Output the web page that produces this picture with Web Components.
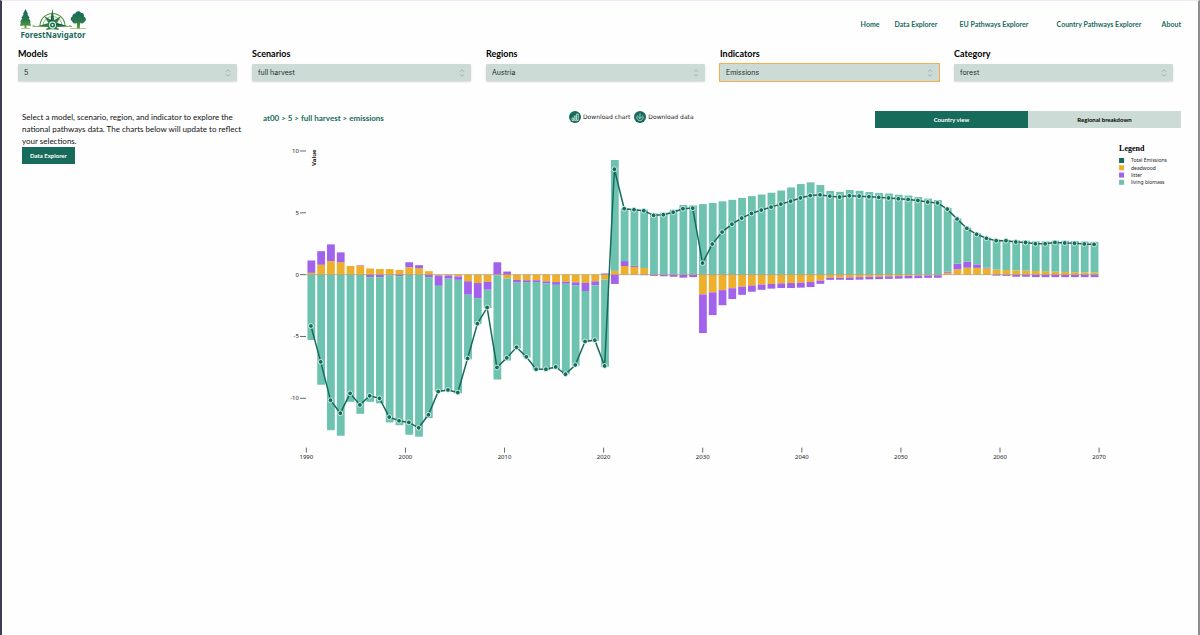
<!DOCTYPE html>
<html lang="en">
<head>
<meta charset="utf-8">
<meta name="viewport" content="width=device-width, initial-scale=1">
<title>ForestNavigator</title>
<style>
  html, body { margin: 0; height: 100%; }
  body {
    --green: #176b5b;
    --pale: #cddbd7;
    --ui: "Inter", "Liberation Sans", sans-serif;
    --head: "Lato", "Liberation Sans", sans-serif;
    background: #fefefe;
    color: #111;
    font-family: var(--head);
  }
</style>
</head>
<body>
<forest-app></forest-app>

<script>
class ForestLogo extends HTMLElement {
  connectedCallback() {
    this.attachShadow({ mode: 'open' });
    this.shadowRoot.innerHTML = `
      <style>
        :host { display: block; }
        a { display: flex; flex-direction: column; align-items: center; color: #1b6a5c; text-decoration: none; }
        svg { display: block; }
        span { font: 700 8px/10px "Noto Sans", "Open Sans", sans-serif; }
      </style>
      <a href="#">
        <svg width="68" height="21" viewBox="0 0 68 21" aria-hidden="true">
          <defs>
            <linearGradient id="g" x1="0" y1="0" x2="0" y2="1">
              <stop offset="0" stop-color="#12695c"/><stop offset=".6" stop-color="#2c7a4c"/><stop offset="1" stop-color="#5fa33a"/>
            </linearGradient>
          </defs>
          <path d="M6.500 0 9 5 8.300 5 10.700 9 9.800 9 12 13.500 11 13.300 12 17 7.500 16.500 7.500 19H5.500V16.500L1 17 2 13.300 1 13.500 3.200 9 2.300 9 4.700 5H4Z" fill="url(#g)"/>
          <path d="M2 19.500H11M51 19.500H67" stroke="#8dbb58" stroke-width=".7"/>
          <g fill="none" stroke="#55953b">
            <path d="M21 17A12.500 12.500 0 0 1 46 17" stroke-width="1.100"/>
            <path d="M24 17A9.500 9.500 0 0 1 43 17" stroke-width=".7"/>
            <path d="M27 20H40" stroke-width=".7"/>
            <path d="M14 17.500H53" stroke-width=".7"/>
          </g>
          <path d="M33.500 0 35.300 11 42 7 37.500 14 48 17 37.500 18 40 21 33.500 19.500 27 21 29.500 18 19 17 29.500 14 25 7 31.700 11Z" fill="#2e7d45"/>
          <path d="M33.500 0V13L25 7 31.700 11ZM48 17 37 16 42 7 37.500 14Z" fill="#12594e"/>
          <circle cx="33.500" cy="16" r="3.400" fill="#fff"/>
          <circle cx="33.500" cy="16" r="2.500" fill="#176b5b"/>
          <circle cx="33.500" cy="16" r="1" fill="#fff"/>
          <circle cx="14.500" cy="17" r="1" fill="#8dbb58"/><circle cx="51" cy="17" r="1" fill="#8dbb58"/>
          <path d="M53 12C51 11 51.500 8 53.500 7.500 53 5.500 55 4 56.500 4.500 57 2 61 1.500 62 4 64.500 3.500 65.500 6 64.800 7.500 67.500 8.500 67.500 12 65.500 12.700 64.500 15 62 14.500 61 14L60.800 19.500H58L58 14C56.500 15 54 15 53 12Z" fill="url(#g)"/>
        </svg>
        <span>ForestNavigator</span>
      </a>
    `;
  }
}
customElements.define('forest-logo', ForestLogo);

class ForestNav extends HTMLElement {
  connectedCallback() {
    this.attachShadow({ mode: 'open' });
    this.shadowRoot.innerHTML = `
      <style>
        :host { display: block; }
        nav { display: grid; grid-template-columns: 34px 65px 97px 105px auto; }
        a { color: var(--green); font: 700 7px/9px var(--head); text-decoration: none; white-space: nowrap; }
      </style>
      <nav>
        <a href="#">Home</a>
        <a href="#">Data Explorer</a>
        <a href="#">EU Pathways Explorer</a>
        <a href="#">Country Pathways Explorer</a>
        <a href="#">About</a>
      </nav>
    `;
  }
}
customElements.define('forest-nav', ForestNav);

class FilterSelect extends HTMLElement {
  connectedCallback() {
    this.attachShadow({ mode: 'open' });
    this.shadowRoot.innerHTML = `
      <style>
        :host { display: block; }
        label { display: block; font: 700 9px/12px var(--head); margin-bottom: 4px; color: #000; }
        .field { display: grid; align-items: center; }
        select, svg { grid-area: 1 / 1; }
        select {
          appearance: none;
          box-sizing: border-box;
          width: 100%;
          height: 17px;
          padding: 0 6px;
          border: 0;
          border-radius: 1px;
          outline: 0;
          background: var(--pale);
          box-shadow: 0 1px 2px rgba(0, 0, 0, .16);
          color: #1d2b2b;
          font: 400 7px/16px var(--ui);
        }
        :host([active]) .field { background: #f7ae4e; margin: -1px; padding: 1px; }
        :host([active]) select { box-shadow: none; }
        svg { justify-self: end; margin-right: 6px; pointer-events: none; }
      </style>
      <label for="s">${this.getAttribute('label')}</label>
      <div class="field">
        <select id="s"><option>${this.getAttribute('value')}</option></select>
        <svg width="6" height="8" viewBox="0 0 6 8" fill="none" stroke="#9aa6ad" stroke-width=".8" aria-hidden="true">
          <path d="M1 2.800 3 .8 5 2.800M1 5.200 3 7.200 5 5.200"/>
        </svg>
      </div>
    `;
  }
}
customElements.define('filter-select', FilterSelect);

class DownloadButton extends HTMLElement {
  connectedCallback() {
    const icons = {
      chart: '<path d="M3 9.500V7H4.600V9.500ZM5.300 9.500V5H6.900V9.500ZM7.600 9.500V3H9.200V9.500Z"/>',
      data: '<path d="M6 2.500V7.500M4.200 5.800 6 7.600 7.800 5.800M3.500 4.500C2 7 3.500 9.500 6 9.500S10 7 8.500 4.500"/>'
    };
    this.attachShadow({ mode: 'open' });
    this.shadowRoot.innerHTML = `
      <style>
        :host { display: block; }
        button {
          display: flex;
          align-items: center;
          gap: 2px;
          padding: 0;
          border: 0;
          background: none;
          color: #222;
          font: 400 6px/12px "DejaVu Sans", sans-serif;
          white-space: nowrap;
        }
        svg { display: block; }
      </style>
      <button type="button">
        <svg width="12" height="12" viewBox="0 0 12 12" aria-hidden="true">
          <circle cx="6" cy="6" r="6" fill="#176b5b"/>
          <g fill="none" stroke="#d5e8e2" stroke-width=".8">${icons[this.getAttribute('icon')]}</g>
        </svg>
        <slot></slot>
      </button>
    `;
  }
}
customElements.define('download-button', DownloadButton);

class ViewToggle extends HTMLElement {
  connectedCallback() {
    this.attachShadow({ mode: 'open' });
    this.shadowRoot.innerHTML = `
      <style>
        :host { display: grid; grid-template-columns: 1fr 1fr; }
        button {
          height: 17px;
          padding: 0;
          border: 0;
          background: var(--pale);
          color: #000;
          font: 700 6px/17px var(--head);
        }
        button[aria-pressed="true"] { background: var(--green); color: #fff; }
      </style>
      <button type="button" aria-pressed="true">Country view</button>
      <button type="button" aria-pressed="false">Regional breakdown</button>
    `;
  }
}
customElements.define('view-toggle', ViewToggle);

// Yearly values 1990-2070: [deadwood, litter, end of the stacked bar, total emissions]
const YEARS = [
  [.15, 1, -5.28, -4.15], [.8, 1.1, -8.9, -7.05], [1.1, 1.35, -12.58, -10.15], [1, .8, -13.03, -11.2],
  [.7, 0, -10.28, -9.6], [.72, .04, -11.25, -10.53], [.5, -.2, -10.28, -9.8], [.45, -.2, -10.4, -10],
  [.45, -.04, -11.95, -11.52], [.38, -.13, -12.17, -11.82], [.6, .4, -12.95, -11.95], [.52, .25, -13.1, -12.38],
  [.28, -.2, -11.6, -11.33], [-.08, -.82, -9.45, -9.45], [-.07, -.25, -9.35, -9.32], [-.15, -.27, -9.6, -9.53],
  [-.53, -1.09, -6.85, -6.78], [-.68, -1.22, -4, -3.97], [-.57, -.65, -2.7, -2.66], [-.05, 1, -8.48, -7.5],
  [-.3, .25, -6.95, -6.73], [-.43, -.22, -5.97, -5.87], [-.45, -.15, -6.7, -6.65], [-.45, -.15, -7.7, -7.65],
  [-.55, -.17, -7.72, -7.65], [-.6, -.23, -7.6, -7.46], [-.57, -.16, -8.05, -8.05], [-.62, -.26, -7.35, -7.3],
  [-.66, -.66, -5.4, -5.4], [-.54, -.33, -5.35, -5.3], [-.4, .1, -7.45, -7.38], [.3, -.75, 9.27, 8.52],
  [.7, .4, 5.35, 5.33], [.62, .1, 5.3, 5.25], [.53, -.04, 5.25, 5.17], [0, -.1, 4.95, 4.8],
  [0, -.13, 5, 4.85], [0, -.17, 5.25, 5.05], [0, -.24, 5.63, 5.33], [0, -.2, 5.6, 5.38],
  [-1.6, -3.13, 5.7, .94], [-1.43, -1.84, 5.8, 2.47], [-1.25, -1.22, 5.93, 3.44], [-1.1, -.87, 6.05, 4.08],
  [-.97, -.66, 6.2, 4.57], [-.87, -.51, 6.35, 4.95], [-.8, -.43, 6.48, 5.22], [-.75, -.38, 6.62, 5.46],
  [-.7, -.38, 6.8, 5.7], [-.68, -.4, 7.05, 5.94], [-.65, -.4, 7.33, 6.2], [-.6, -.4, 7.46, 6.4],
  [-.48, -.27, 7.25, 6.45], [-.25, -.17, 6.77, 6.35], [-.24, -.17, 6.7, 6.28], [-.23, -.2, 6.85, 6.38],
  [-.2, -.2, 6.78, 6.35], [-.18, -.2, 6.68, 6.3], [-.16, -.2, 6.6, 6.25], [-.14, -.2, 6.56, 6.2],
  [-.12, -.2, 6.46, 6.14], [-.1, -.2, 6.4, 6.08], [-.08, -.2, 6.28, 6], [-.06, -.2, 6.15, 5.87],
  [-.05, -.2, 6.03, 5.8], [.15, .1, 5.4, 5.3], [.43, .46, 4.55, 4.5], [.57, .5, 3.8, 3.75],
  [.55, .28, 3.35, 3.26], [.5, .06, 3, 2.94], [.4, -.08, 2.85, 2.75], [.37, -.1, 2.82, 2.75],
  [.35, -.17, 2.78, 2.64], [.33, -.17, 2.75, 2.6], [.3, -.2, 2.7, 2.5], [.28, -.2, 2.7, 2.5],
  [.25, -.2, 2.75, 2.6], [.22, -.2, 2.74, 2.56], [.2, -.2, 2.72, 2.54], [.18, -.2, 2.68, 2.48],
  [.17, -.2, 2.66, 2.45]
];

class EmissionsChart extends HTMLElement {
  connectedCallback() {
    const x = i => 48 + i * 9.8;
    const y = v => 134.8 - v * 12.38;
    const colors = { total: '#176b5b', dead: '#eeb02c', litter: '#a163ec', living: '#6ec2b0' };
    let bars = '', dots = '';

    YEARS.forEach(([dead, litter, end, total], i) => {
      let up = 0, down = 0;
      const rect = (from, to, fill) => {
        bars += `<rect x="${(x(i) - 3.5).toFixed(1)}" y="${y(Math.max(from, to)).toFixed(1)}" width="7.8" height="${(Math.abs(to - from) * 12.38).toFixed(1)}" fill="${fill}"/>`;
      };
      [[dead, colors.dead], [litter, colors.litter]].forEach(([v, fill]) => {
        if (v > 0) { rect(up, up + v, fill); up += v; }
        if (v < 0) { rect(down, down + v, fill); down += v; }
      });
      rect(end > 0 ? up : down, end, colors.living);
      dots += `<circle cx="${x(i).toFixed(1)}" cy="${y(total).toFixed(1)}" r="2.4"/>`;
    });

    const line = YEARS.map((d, i) => `${x(i).toFixed(1)},${y(d[3]).toFixed(1)}`).join(' ');
    const yTicks = [10, 5, 0, -5, -10].map(v =>
      `<path d="M37 ${y(v)}H43"/><text x="36" y="${y(v) + 2}" text-anchor="end">${v}</text>`).join('');
    const xTicks = [0, 1, 2, 3, 4, 5, 6, 7, 8].map(n =>
      `<path d="M${43.4 + n * 99.2} 308V313"/><text x="${43.4 + n * 99.2}" y="319" text-anchor="middle">${1990 + n * 10}</text>`).join('');
    const legend = [['Total Emissions', colors.total], ['deadwood', colors.dead], ['litter', colors.litter], ['living biomass', colors.living]]
      .map(([name, fill], i) => `<rect x="857" y="${18 + i * 7.3}" width="5" height="5" fill="${fill}"/><text x="869" y="${22.5 + i * 7.3}">${name}</text>`).join('');

    this.attachShadow({ mode: 'open' });
    this.shadowRoot.innerHTML = `
      <style>
        :host { display: block; }
        svg { display: block; width: 100%; height: auto; }
        .axis path { stroke: #444; stroke-width: .8; }
        text { fill: #222; font: 400 6px "Noto Sans", sans-serif; }
        .value { font-weight: 700; }
        .legend text { font: 400 5px "Noto Sans", sans-serif; }
        .legend .title { fill: #000; font: 700 8px "Liberation Serif", serif; }
      </style>
      <svg viewBox="0 0 919 330" role="img" aria-label="Emissions by year">
        <g>${bars}</g>
        <path d="M43 134.800H837" stroke="#a99a72" stroke-width=".7"/>
        <polyline points="${line}" fill="none" stroke="#176b5b" stroke-width="1.500"/>
        <g fill="#176b5b" stroke="#e2f4ee" stroke-width=".9">${dots}</g>
        <g class="axis">${yTicks}${xTicks}</g>
        <text class="value" transform="translate(53 26) rotate(-90)">Value</text>
        <g class="legend"><text class="title" x="857" y="11">Legend</text>${legend}</g>
      </svg>
    `;
  }
}
customElements.define('emissions-chart', EmissionsChart);

class ForestApp extends HTMLElement {
  connectedCallback() {
    this.attachShadow({ mode: 'open' });
    this.shadowRoot.innerHTML = `
      <style>
        :host {
          display: block;
          box-sizing: border-box;
          min-height: 100vh;
          border-left: 2px solid #3a3d55;
          border-right: 2px solid #8d8d8d;
          border-top: 1px solid #f3e6f5;
        }
        header { display: flex; justify-content: space-between; align-items: flex-start; padding: 8px 17px 0; }
        forest-nav { margin-top: 11px; }
        .filters {
          display: grid;
          grid-template-columns: repeat(5, 1fr);
          gap: 15px;
          padding: 8px 25px 0 16px;
        }
        .content {
          display: grid;
          grid-template-columns: 224px 1fr;
          gap: 17px;
          padding: 30px 17px 0 20px;
        }
        p { margin: 0; font: 400 8px/12px "Lato", sans-serif; }
        .explore {
          height: 17px;
          padding: 0 8px;
          border: 0;
          background: var(--green);
          color: #fff;
          font: 700 6px/17px var(--head);
          display: block;
        }
        .toolbar { display: grid; grid-template-columns: repeat(3, 1fr); }
        h2 { margin: 0; color: var(--green); font: 700 8px/14px var(--head); }
        .downloads { display: flex; align-items: flex-start; gap: 4px; }
        emissions-chart { margin-top: 12px; }
      </style>
      <header>
        <forest-logo></forest-logo>
        <forest-nav></forest-nav>
      </header>
      <section class="filters">
        <filter-select label="Models" value="5"></filter-select>
        <filter-select label="Scenarios" value="full harvest"></filter-select>
        <filter-select label="Regions" value="Austria"></filter-select>
        <filter-select label="Indicators" value="Emissions" active></filter-select>
        <filter-select label="Category" value="forest"></filter-select>
      </section>
      <main class="content">
        <aside>
          <p>Select a model, scenario, region, and indicator to explore the national pathways data. The charts below will update to reflect your selections.</p>
          <button class="explore" type="button">Data Explorer</button>
        </aside>
        <section>
          <div class="toolbar">
            <h2>at00 &gt; 5 &gt; full harvest &gt; emissions</h2>
            <div class="downloads">
              <download-button icon="chart">Download chart</download-button>
              <download-button icon="data">Download data</download-button>
            </div>
            <view-toggle></view-toggle>
          </div>
          <emissions-chart></emissions-chart>
        </section>
      </main>
    `;
  }
}
customElements.define('forest-app', ForestApp);
</script>
</body>
</html>
